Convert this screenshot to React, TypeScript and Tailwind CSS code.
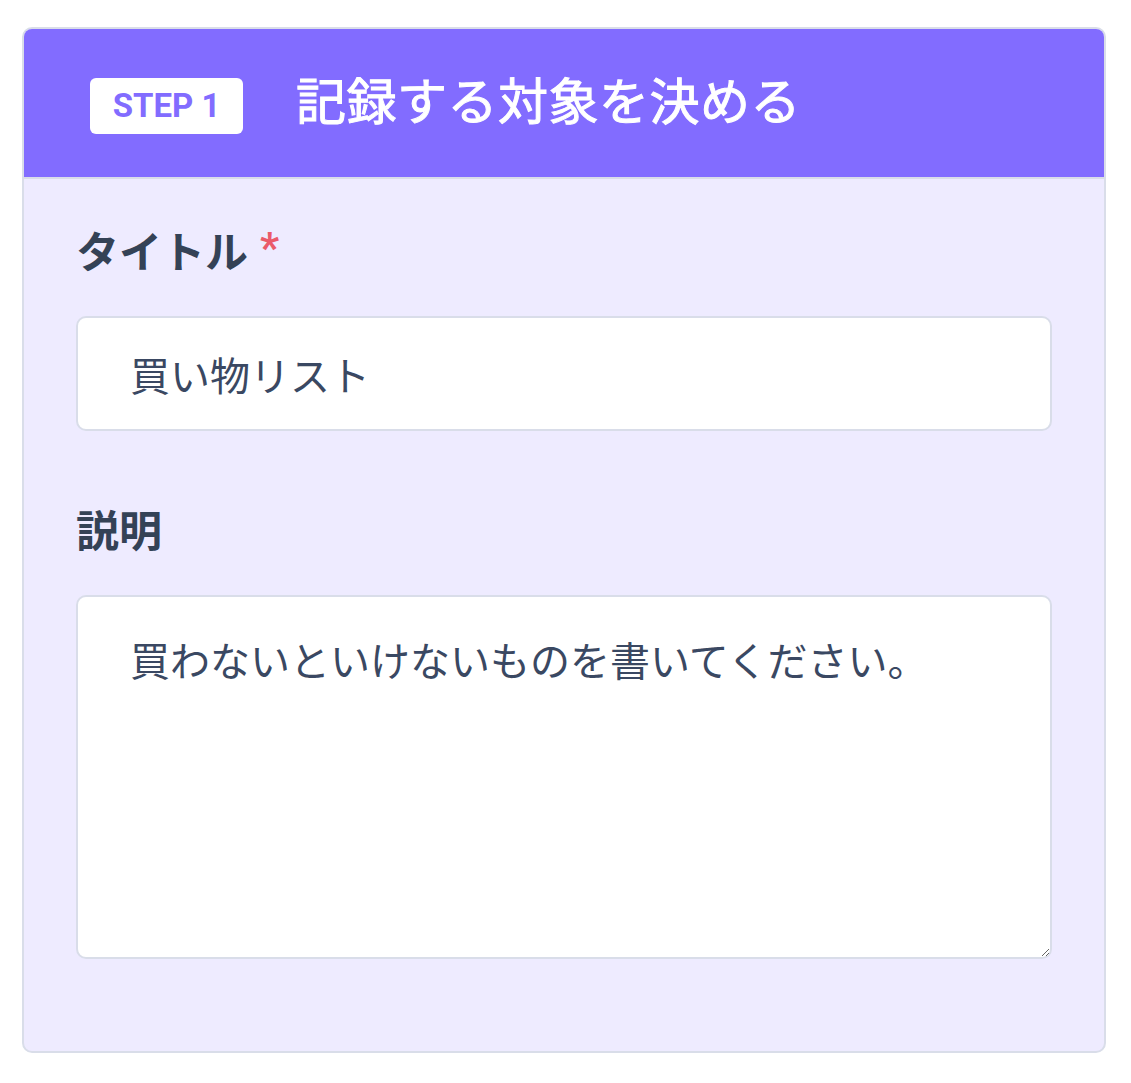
export default function App() {
  return (
    <div className="min-h-screen bg-white pl-[22px] pr-[25px] pt-[27px] font-['Roboto','Noto_Sans_CJK_JP',sans-serif]">
      <div className="overflow-hidden rounded-[10px] border-2 border-[#d9dde9] bg-[#eeebff]">
        <div className="flex h-[150px] items-center gap-[53px] border-b-2 border-[#d9dde9] bg-[#826cff] pl-[66px]">
          <span className="mt-[6px] flex h-[56px] w-[153px] items-center justify-center rounded-[6px] bg-white text-[33px] font-bold text-[#826cff]">
            STEP 1
          </span>
          <h1 className="text-[50px] font-normal leading-none tracking-[0.5px] text-white [-webkit-text-stroke:1px_white]">
            記録する対象を決める
          </h1>
        </div>

        <div className="px-[52px] pb-[92px] pt-[42px] text-[#344256]">
          <label className="flex items-start text-[43px] font-bold leading-[64px]">
            タイトル
            <span className="ml-[12px] text-[42px] font-bold leading-[54px] text-[#ea5a6a]">*</span>
          </label>
          <input
            readOnly
            value="買い物リスト"
            className="mt-[31px] block h-[115px] w-full rounded-[10px] border-2 border-[#d9dde9] bg-white px-[52px] text-[40px] text-[#3a4862] outline-none"
          />

          <label className="mt-[69px] block text-[43px] font-bold leading-[64px]">説明</label>
          <textarea
            readOnly
            value="買わないといけないものを書いてください。"
            className="mt-[31px] block h-[364px] w-full rounded-[10px] border-2 border-[#d9dde9] bg-white px-[52px] pt-[36px] text-[40px] leading-[60px] text-[#3a4862] outline-none"
          />
        </div>
      </div>
    </div>
  )
}
